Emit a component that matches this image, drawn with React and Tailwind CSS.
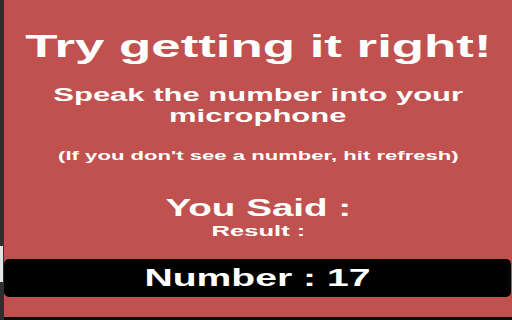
import React from "react";

const stretch = "inline-block scale-x-[1.65] whitespace-nowrap";

export default function App() {
  return (
    <div
      className="flex h-[320px] w-[512px] overflow-hidden bg-[#0b0b0b] text-white"
      style={{ fontFamily: '"Liberation Sans", Arial, sans-serif' }}
    >
      {/* left edge of the host window */}
      <div className="flex h-full w-[4px] flex-col bg-[#2f2f2f]">
        <div className="mt-[246px] h-[36px] w-[3px] bg-[#e4e4e4]" />
      </div>

      <div className="flex h-[317px] flex-1 flex-col items-center bg-[#c0514e] font-bold">
        <h1 className="mt-[30px] text-center text-[32px] leading-[32px]">
          <span className={stretch}>Try getting it right!</span>
        </h1>

        <div className="mt-[22px] text-center text-[18.8px] leading-[21px]">
          <div>
            <span className={stretch}>Speak the number into your</span>
          </div>
          <div>
            <span className={stretch}>microphone</span>
          </div>
        </div>

        <p className="mt-[22px] text-center text-[13.4px] leading-[16px]">
          <span className={stretch}>(If you don't see a number, hit refresh)</span>
        </p>

        <h2 className="mt-[32px] text-center text-[23.4px] leading-[24px]">
          <span className={stretch}>You Said :</span>
        </h2>
        <h3 className="mt-[3px] text-center text-[15.5px] leading-[16px]">
          <span className={stretch}>Result :</span>
        </h3>

        <div className="mt-[20px] mr-[1px] flex h-[38px] w-[507px] items-center justify-center self-start rounded-[5px] bg-black text-[23.7px] leading-[38px]">
          <span className={stretch}>Number : 17</span>
        </div>
      </div>
    </div>
  );
}
